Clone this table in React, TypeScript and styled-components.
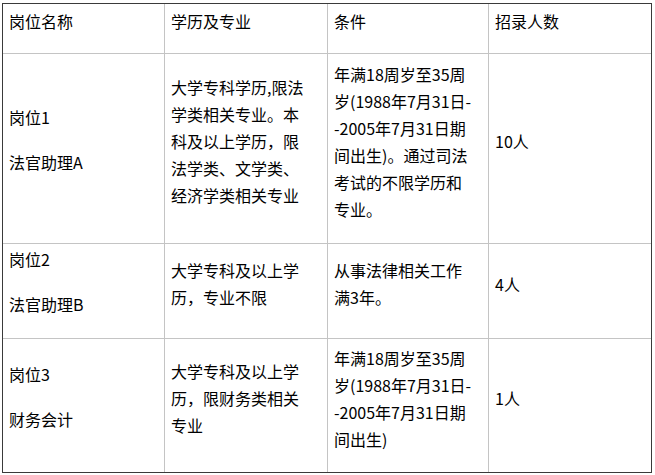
import React from "react";
import styled, { createGlobalStyle } from "styled-components";

const GlobalStyle = createGlobalStyle`
  html, body {
    margin: 0;
    background: #fff;
  }
  body {
    padding: 3px 0 0 2px;
    font-family: "Noto Sans CJK SC", "Noto Sans", sans-serif;
    color: #000;
  }
`;

/* ------------------ Table grid ------------------ */
const Table = styled.div`
  display: grid;
  grid-template-columns: 162px 163px 161px 162px;
  grid-template-rows: 50px 190px 95px 133px;
  width: 650px;
  box-sizing: border-box;
  border: 1px solid #3a3a3a;
`;

const Cell = styled.div<{ lastCol?: boolean; lastRow?: boolean }>`
  box-sizing: border-box;
  display: flex;
  flex-direction: column;
  justify-content: center;
  padding: 0 6px;
  border-right: ${(p) => (p.lastCol ? "none" : "1px solid #c4c4c4")};
  border-bottom: ${(p) => (p.lastRow ? "none" : "1px solid #c4c4c4")};
  font-size: 16px;
  line-height: 27px;
  white-space: nowrap;
  overflow: visible;
`;

const Para = styled.p<{ gap?: number }>`
  margin: 0 0 ${(p) => p.gap ?? 14}px;
`;

type Row = {
  name: string[];
  edu: string[];
  cond: string[];
  count: string;
};

const header = ["岗位名称", "学历及专业", "条件", "招录人数"];

const rows: Row[] = [
  {
    name: ["岗位1", "法官助理A"],
    edu: [
      "大学专科学历,限法",
      "学类相关专业。本",
      "科及以上学历，限",
      "法学类、文学类、",
      "经济学类相关专业",
    ],
    cond: [
      "年满18周岁至35周",
      "岁(1988年7月31日-",
      "-2005年7月31日期",
      "间出生)。通过司法",
      "考试的不限学历和",
      "专业。",
    ],
    count: "10人",
  },
  {
    name: ["岗位2", "法官助理B"],
    edu: ["大学专科及以上学", "历，专业不限"],
    cond: ["从事法律相关工作", "满3年。"],
    count: "4人",
  },
  {
    name: ["岗位3", "财务会计"],
    edu: ["大学专科及以上学", "历，限财务类相关", "专业"],
    cond: [
      "年满18周岁至35周",
      "岁(1988年7月31日-",
      "-2005年7月31日期",
      "间出生)",
    ],
    count: "1人",
  },
];

const Lines = ({ lines }: { lines: string[] }) => (
  <Para>
    {lines.map((l, i) => (
      <React.Fragment key={i}>
        {i > 0 && <br />}
        {l}
      </React.Fragment>
    ))}
  </Para>
);

const App = () => {
  return (
    <>
      <GlobalStyle />
      <Table>
        {header.map((h, i) => (
          <Cell key={h} lastCol={i === 3}>
            <Para>{h}</Para>
          </Cell>
        ))}
        {rows.map((r, ri) => {
          const last = ri === rows.length - 1;
          return (
            <React.Fragment key={ri}>
              <Cell lastRow={last}>
                {r.name.map((n) => (
                  <Para key={n} gap={18}>
                    {n}
                  </Para>
                ))}
              </Cell>
              <Cell lastRow={last}>
                <Lines lines={r.edu} />
              </Cell>
              <Cell lastRow={last}>
                <Lines lines={r.cond} />
              </Cell>
              <Cell lastRow={last} lastCol>
                <Para>{r.count}</Para>
              </Cell>
            </React.Fragment>
          );
        })}
      </Table>
    </>
  );
};

export default App;
